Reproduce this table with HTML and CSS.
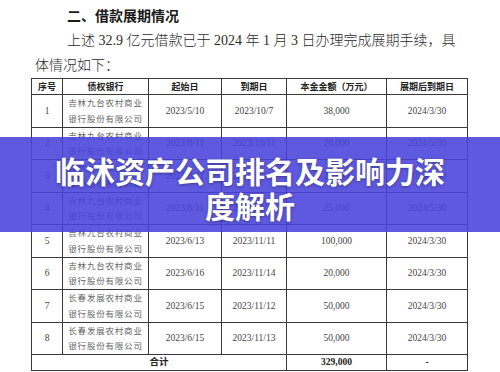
FILE: index.html
```html
<!DOCTYPE html>
<html lang="zh">
<head>
<meta charset="utf-8">
<link rel="stylesheet" href="styles.css">
</head>
<body>
<div class="page">
  <h2 class="heading">二、借款展期情况</h2>
  <p class="para"><span class="indent">上述 32.9 亿元借款已于 2024 年 1 月 3 日办理完成展期手续，具</span><br>体情况如下：</p>
  <table class="loans">
    <colgroup>
      <col class="c1"><col class="c2"><col class="c3"><col class="c4"><col class="c5"><col class="c6">
    </colgroup>
    <thead>
      <tr><th>序号</th><th>债权银行</th><th>起始日</th><th>到期日</th><th>本金金额（万元）</th><th>展期后到期日</th></tr>
    </thead>
    <tbody>
      <tr><td>1</td><td class="bank">吉林九台农村商业<br>银行股份有限公司</td><td>2023/5/10</td><td>2023/10/7</td><td>38,000</td><td>2024/3/30</td></tr>
      <tr><td>2</td><td class="bank">吉林九台农村商业<br>银行股份有限公司</td><td>2023/8/11</td><td>2023/10/11</td><td>20,000</td><td>2024/5/30</td></tr>
      <tr><td>3</td><td class="bank">吉林九台农村商业<br>银行股份有限公司</td><td>2023/8/11</td><td>2023/10/11</td><td>26,000</td><td>2024/5/30</td></tr>
      <tr><td>4</td><td class="bank">吉林九台农村商业<br>银行股份有限公司</td><td>2023/8/11</td><td>2023/10/11</td><td>25,000</td><td>2024/5/30</td></tr>
      <tr><td>5</td><td class="bank">吉林九台农村商业<br>银行股份有限公司</td><td>2023/6/13</td><td>2023/11/11</td><td>100,000</td><td>2024/3/30</td></tr>
      <tr><td>6</td><td class="bank">吉林九台农村商业<br>银行股份有限公司</td><td>2023/6/16</td><td>2023/11/14</td><td>20,000</td><td>2024/3/30</td></tr>
      <tr><td>7</td><td class="bank">长春发展农村商业<br>银行股份有限公司</td><td>2023/6/15</td><td>2023/11/12</td><td>50,000</td><td>2024/3/30</td></tr>
      <tr><td>8</td><td class="bank">长春发展农村商业<br>银行股份有限公司</td><td>2023/6/15</td><td>2023/11/13</td><td>50,000</td><td>2024/3/30</td></tr>
      <tr class="total"><td colspan="4" class="strong">合计</td><td class="strong">329,000</td><td class="strong">-</td></tr>
    </tbody>
  </table>
</div>
<div class="banner">
  <h1 class="title">临沭资产公司排名及影响力深度解析</h1>
</div>
</body>
</html>
```

FILE: styles.css
```css
html, body {
  margin: 0;
  padding: 0;
  background: #ffffff;
}
body {
  width: 500px;
  height: 372px;
  overflow: hidden;
  position: relative;
  font-family: "Liberation Serif", "Noto Sans CJK SC", serif;
  color: #222;
}
.page {
  padding-top: 4px;
}
.heading {
  margin: 0 0 0 67px;
  font-family: "Noto Sans CJK SC", sans-serif;
  font-weight: 700;
  font-size: 14px;
  line-height: 22px;
  color: #1a1a1a;
}
.para {
  margin: 2px 0 0 35px;
  font-size: 14px;
  line-height: 25px;
  color: #2a2a2a;
  font-weight: 300;
}
.indent {
  padding-left: 32px;
}
.loans {
  margin: 0 0 0 31px;
  border-collapse: collapse;
  table-layout: fixed;
  width: 436px;
}
.c1 { width: 31px; }
.c2 { width: 86px; }
.c3 { width: 73px; }
.c4 { width: 65px; }
.c5 { width: 100px; }
.c6 { width: 81px; }
.loans th, .loans td {
  border: 1px solid #3a3a3a;
  text-align: center;
  vertical-align: middle;
  padding: 0;
}
.loans th {
  height: 15px;
  font-family: "Noto Sans CJK SC", sans-serif;
  font-weight: 700;
  font-size: 9px;
  line-height: 15px;
  color: #222;
}
.loans td {
  height: 31px;
  font-size: 9.5px;
  line-height: 16px;
  color: #444;
}
.loans td.bank {
  font-family: "Noto Sans CJK SC", sans-serif;
  font-size: 8.5px;
  letter-spacing: 0.8px;
  color: #666;
  line-height: 15.75px;
}
.loans tr.total td {
  height: 15px;
  line-height: 15px;
}
.loans td.strong {
  font-weight: 700;
  color: #222;
  font-family: "Liberation Serif", "Noto Sans CJK SC", serif;
}
.banner {
  position: absolute;
  left: 0;
  top: 137px;
  width: 500px;
  height: 95px;
  background: rgba(72, 66, 218, 0.88);
  box-sizing: border-box;
  padding: 16px 45px 0;
}
.title {
  margin: 0;
  text-align: center;
  color: #ffffff;
  font-family: "Noto Sans CJK SC", sans-serif;
  font-weight: 700;
  font-size: 30px;
  line-height: 35px;
  text-shadow: 0 1px 3px rgba(0, 0, 0, 0.35);
}
```
